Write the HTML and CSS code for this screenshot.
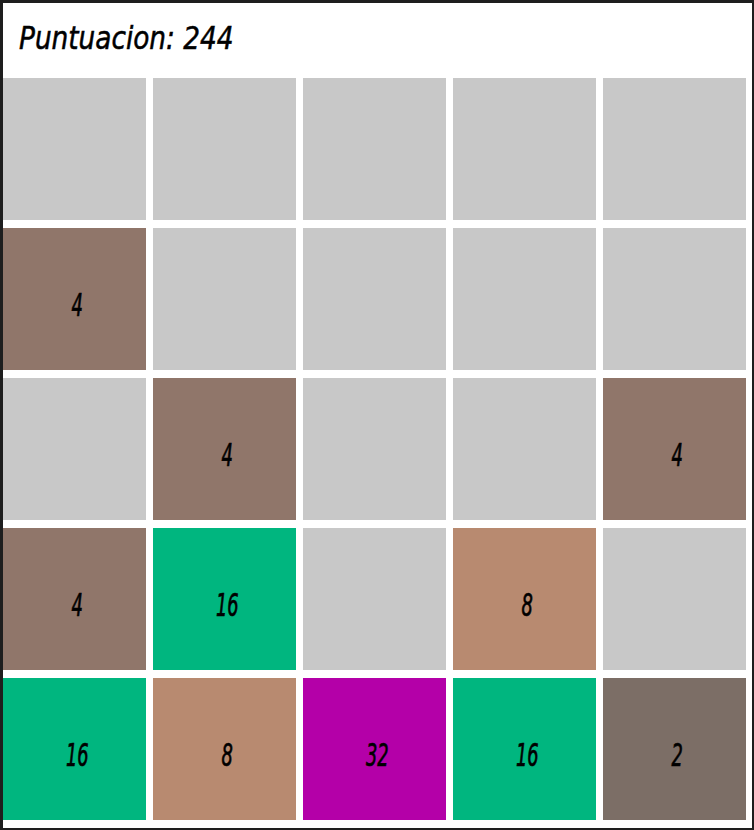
FILE: index.html
```html
<!DOCTYPE html>
<html>
  <head>
    <title>2048</title>
    <meta charset="utf-8">
    <link rel="stylesheet" href="styles.css">
  </head>
  <body>
    <div id="juego">
      <div id="puntuacion"><span>Puntuacion: 244</span></div>
      <div id="tablero">
        <div class="celda"></div>
        <div class="celda"></div>
        <div class="celda"></div>
        <div class="celda"></div>
        <div class="celda"></div>

        <div class="celda n4"><span>4</span></div>
        <div class="celda"></div>
        <div class="celda"></div>
        <div class="celda"></div>
        <div class="celda"></div>

        <div class="celda"></div>
        <div class="celda n4"><span>4</span></div>
        <div class="celda"></div>
        <div class="celda"></div>
        <div class="celda n4"><span>4</span></div>

        <div class="celda n4"><span>4</span></div>
        <div class="celda n16"><span>16</span></div>
        <div class="celda"></div>
        <div class="celda n8"><span>8</span></div>
        <div class="celda"></div>

        <div class="celda n16"><span>16</span></div>
        <div class="celda n8"><span>8</span></div>
        <div class="celda n32"><span>32</span></div>
        <div class="celda n16"><span>16</span></div>
        <div class="celda n2"><span>2</span></div>
      </div>
    </div>
  </body>
</html>
```

FILE: styles.css
```css
html, body{
  margin: 0;
  height: 100%;
  background-color: #1e1e1e;
}
body{
  padding: 3px 2px 2px 3px;
  box-sizing: border-box;
  overflow: hidden;
}
#juego{
  height: 100%;
  background-color: #fff;
  color: #000;
  font-family: "DejaVu Sans Condensed", "DejaVu Sans", sans-serif;
  font-style: italic;
}
#puntuacion{
  height: 75px;
  padding: 0 0 5px 16px;
  box-sizing: border-box;
  display: flex;
  align-items: center;
  font-size: 32px;
  -webkit-text-stroke: 0.5px #000;
}
#puntuacion span{
  transform: scaleX(0.915);
  transform-origin: left center;
}
#tablero{
  display: grid;
  grid-template-columns: repeat(5, 142.5px);
  grid-auto-rows: 142px;
  column-gap: 7.5px;
  row-gap: 8px;
}
.celda{
  background-color: #c8c8c8;
  display: flex;
  align-items: center;
  justify-content: center;
  padding: 12px 0 0 6px;
  box-sizing: border-box;
  font-size: 32px;
  -webkit-text-stroke: 0.7px #000;
}
.celda span{
  transform: scaleX(0.62);
}
.n2{
  background-color: #7c6e66;
}
.n4{
  background-color: #90766a;
}
.n8{
  background-color: #b88a70;
}
.n16{
  background-color: #00b67f;
}
.n32{
  background-color: #b400a8;
}
```
